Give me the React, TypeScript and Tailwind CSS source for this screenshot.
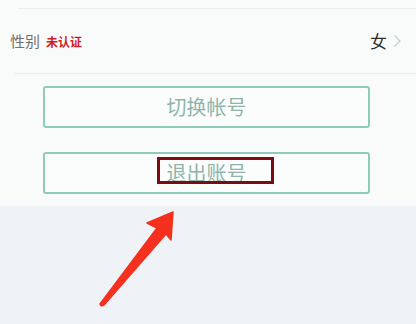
const font = { fontFamily: '"Noto Sans CJK SC", "Noto Sans", sans-serif' };

function OutlineButton({ label, marked }: { label: string; marked?: boolean }) {
  return (
    <div className="relative flex h-[42px] items-center justify-center rounded-[3px] border-2 border-[#8fcbb9] bg-[#fbfdfd]">
      <span className="text-[20px] leading-none text-[#90b3ac]">{label}</span>
      {marked && (
        <div className="absolute left-[112px] top-[3px] h-[27px] w-[117px] border-[3px] border-[#7a0c12]" />
      )}
    </div>
  );
}

export default function App() {
  return (
    <div className="relative flex h-[324px] w-[416px] flex-col overflow-hidden bg-[#eff2f6]" style={font}>
      {/* profile card */}
      <div className="flex h-[206px] flex-col bg-[#f9fbfb]">
        <div className="mt-2 ml-[18px] border-t border-[#e8ecec]" />
        <div className="flex h-[64px] items-center pl-[10px] pr-[14px]">
          <span className="text-[15px] text-[#707070]">性别</span>
          <span className="ml-[6px] mt-[2px] text-[12px] font-semibold text-[#cf1a26]">未认证</span>
          <span className="ml-auto text-[17px] text-[#2e2e2e]">女</span>
          <svg className="ml-[6px]" width="9" height="14" viewBox="0 0 9 14" fill="none">
            <path d="M1.5 1.5 L7 7 L1.5 12.5" stroke="#c9cccc" strokeWidth="1.2" />
          </svg>
        </div>
        <div className="ml-[15px] border-t border-[#e6eaea]" />
        <div className="mt-[12px] flex flex-col gap-[24px] pl-[43px] pr-[46px]">
          <OutlineButton label="切换帐号" />
          <OutlineButton label="退出账号" marked />
        </div>
      </div>

      {/* annotation arrow */}
      <svg className="absolute left-0 top-0" width="416" height="324" viewBox="0 0 416 324">
        <path
          d="M100 304 Q101 307 104 305 L166 234 L171 240 L173 212 L147 223 L157 228 Z"
          fill="#f5301e"
          stroke="#f5301e"
          strokeWidth="1.5"
          strokeLinejoin="round"
        />
      </svg>
    </div>
  );
}
